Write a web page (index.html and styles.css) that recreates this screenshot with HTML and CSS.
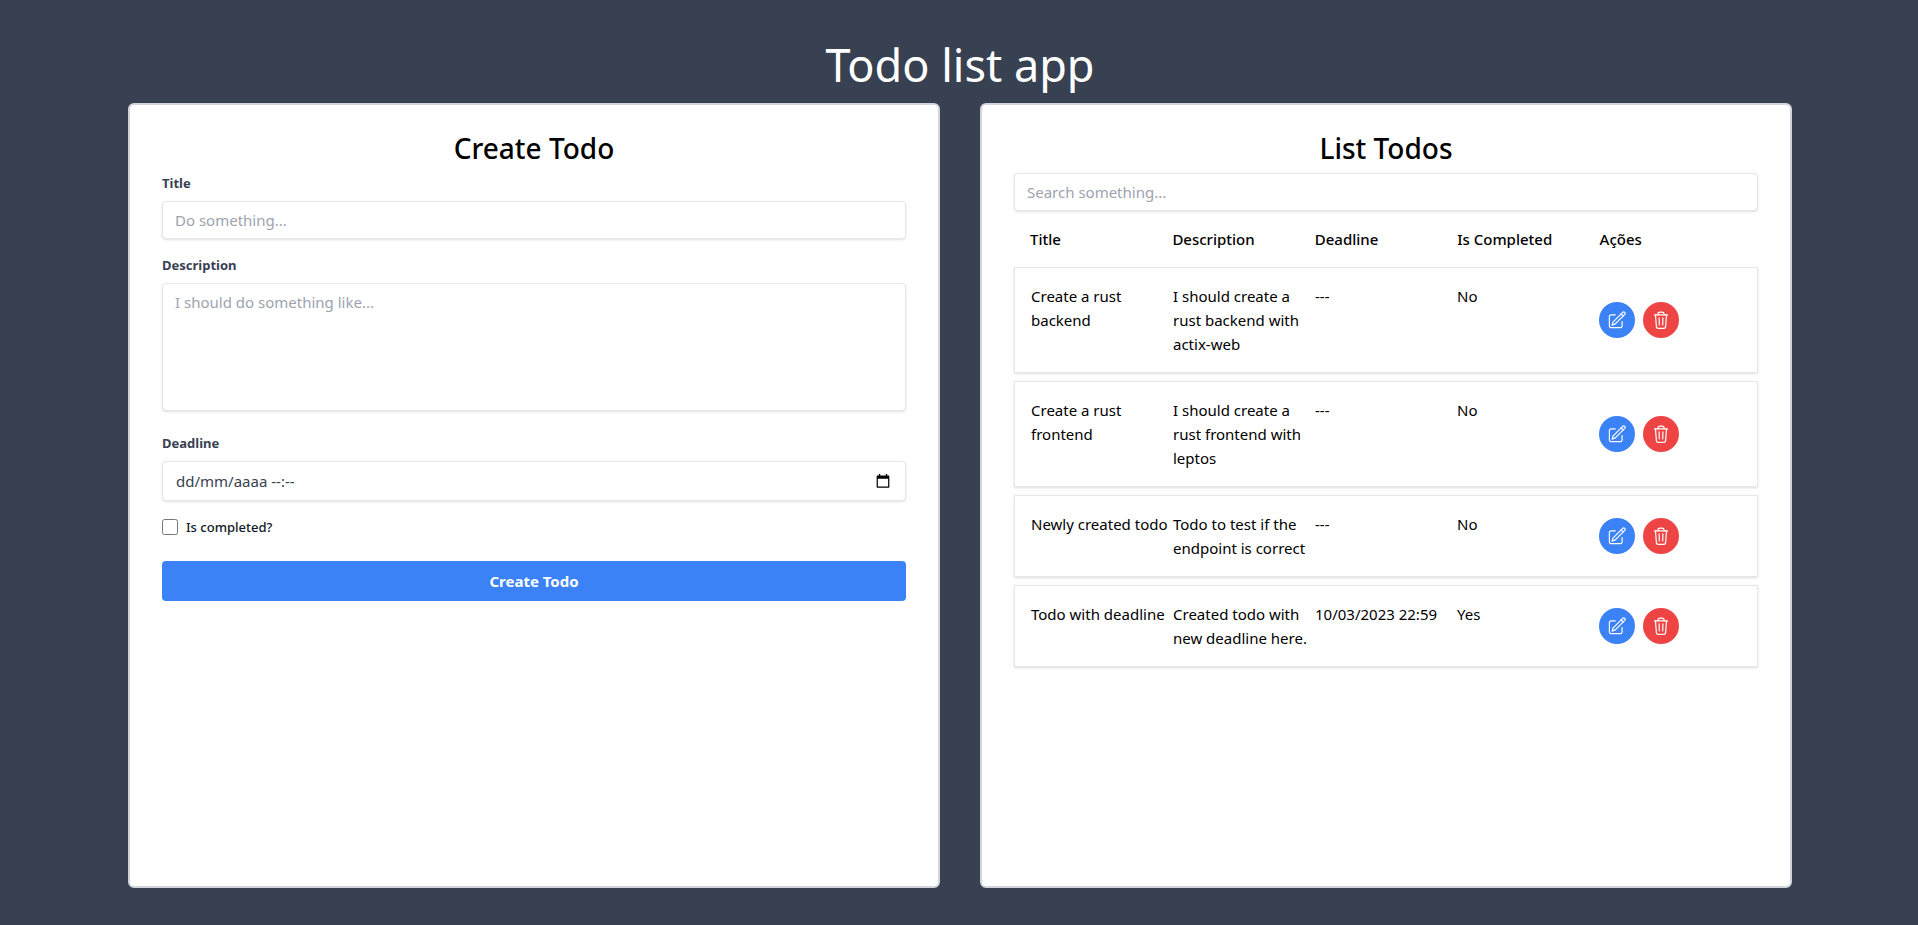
FILE: index.html
```html
<!DOCTYPE html>
<html lang="en">
<head>
<meta charset="utf-8">
<meta name="viewport" content="width=device-width, initial-scale=1">
<title>Todo list app</title>
<link rel="stylesheet" href="styles.css">
</head>
<body>
<svg class="sprite" aria-hidden="true">
  <symbol id="edit" viewBox="0 0 18 18">
    <g fill="none" stroke="currentColor" stroke-width="1.2" stroke-linecap="round" stroke-linejoin="round">
      <path d="M7.2 3.900H2.900A1.500 1.500 0 0 0 1.400 5.400v9.700a1.500 1.500 0 0 0 1.500 1.500h9.700a1.500 1.500 0 0 0 1.500-1.500V10.500"/>
      <path d="M14.700 1.300a1.450 1.450 0 0 1 2.050 2.050L7.300 12.900 4 14.100 5.200 10.800z"/>
      <path d="M13.200 2.900l2 2"/>
    </g>
  </symbol>
  <symbol id="trash" viewBox="0 0 18 18">
    <g fill="none" stroke="currentColor" stroke-width="1.2" stroke-linecap="round" stroke-linejoin="round">
      <path d="M2.500 3.900h13"/>
      <path d="M5.700 3.700C5.900 1.900 6.800 1.200 8 1.200h2c1.200 0 2.100.7 2.300 2.500"/>
      <path d="M3.500 4.200l.9 11.400a1.800 1.800 0 0 0 1.800 1.700h5.600a1.800 1.800 0 0 0 1.800-1.700l.9-11.400"/>
      <path d="M7.100 6.900l.2 7M10.900 6.900l-.2 7"/>
    </g>
  </symbol>
</svg>
<div class="page">
  <h1 class="page-title">Todo list app</h1>
  <main class="panels">
    <section class="panel">
      <h2 class="panel-title">Create Todo</h2>
      <form class="form">
        <div class="field">
          <label class="label" for="title">Title</label>
          <input class="control" id="title" type="text" placeholder="Do something...">
        </div>
        <div class="field field-area">
          <label class="label" for="description">Description</label>
          <textarea class="control area" id="description" placeholder="I should do something like..."></textarea>
        </div>
        <div class="field">
          <label class="label" for="deadline">Deadline</label>
          <div class="control date">
            <input class="date-input" id="deadline" type="text" placeholder="dd/mm/aaaa --:--">
            <button class="date-button" type="button" aria-label="Open calendar">
              <svg class="date-icon" viewBox="0 0 14 15" aria-hidden="true"><path fill="currentColor" fill-rule="evenodd" d="M2.500 0H4v1.500h6V0h1.500v1.500H13a.8.8 0 0 1 .8.8V14a.8.8 0 0 1-.8.8H1A.8.8 0 0 1 .2 14V2.300a.8.8 0 0 1 .8-.8h1.500zM1.500 5v8.500h11V5z"/></svg>
            </button>
          </div>
        </div>
        <div class="check">
          <input class="checkbox" id="completed" type="checkbox">
          <label class="check-label" for="completed">Is completed?</label>
        </div>
        <button class="submit" type="button">Create Todo</button>
      </form>
    </section>
    <section class="panel">
      <h2 class="panel-title">List Todos</h2>
      <input class="control" type="text" placeholder="Search something..." aria-label="Search">
      <table class="todos">
        <thead class="head">
          <tr class="row head-row"><th>Title</th><th>Description</th><th>Deadline</th><th>Is Completed</th><th>Ações</th></tr>
        </thead>
        <tbody class="body">
          <tr class="row item">
            <td>Create a rust backend</td><td>I should create a rust backend with actix-web</td><td>---</td><td>No</td>
            <td class="actions"><button class="round edit" type="button" aria-label="Edit"><svg class="icon"><use href="#edit"/></svg></button><button class="round delete" type="button" aria-label="Delete"><svg class="icon"><use href="#trash"/></svg></button></td>
          </tr>
          <tr class="row item">
            <td>Create a rust frontend</td><td>I should create a rust frontend with leptos</td><td>---</td><td>No</td>
            <td class="actions"><button class="round edit" type="button" aria-label="Edit"><svg class="icon"><use href="#edit"/></svg></button><button class="round delete" type="button" aria-label="Delete"><svg class="icon"><use href="#trash"/></svg></button></td>
          </tr>
          <tr class="row item">
            <td>Newly created todo</td><td>Todo to test if the endpoint is correct</td><td>---</td><td>No</td>
            <td class="actions"><button class="round edit" type="button" aria-label="Edit"><svg class="icon"><use href="#edit"/></svg></button><button class="round delete" type="button" aria-label="Delete"><svg class="icon"><use href="#trash"/></svg></button></td>
          </tr>
          <tr class="row item">
            <td>Todo with deadline</td><td>Created todo with new deadline here.</td><td>10/03/2023 22:59</td><td>Yes</td>
            <td class="actions"><button class="round edit" type="button" aria-label="Edit"><svg class="icon"><use href="#edit"/></svg></button><button class="round delete" type="button" aria-label="Delete"><svg class="icon"><use href="#trash"/></svg></button></td>
          </tr>
        </tbody>
      </table>
    </section>
  </main>
</div>
</body>
</html>
```
FILE: styles.css
```css
*, *::before, *::after { box-sizing: border-box; }

body {
  margin: 0;
  background: #374151;
  color: #000;
  font-family: "Noto Sans", "Open Sans", sans-serif;
  font-size: 15px;
  line-height: 24px;
}

h1, h2, th, td { margin: 0; padding: 0; }

input, textarea, button { font: inherit; margin: 0; }

.sprite { display: none; }

.page {
  display: flex;
  flex-direction: column;
  min-height: 100vh;
  padding: 41px 126px 37px 128px;
}

.page-title {
  margin-bottom: 14px;
  color: #fff;
  font-size: 45px;
  font-weight: 400;
  line-height: 48px;
  text-align: center;
}

.panels {
  flex: 1;
  display: grid;
  grid-template-columns: 1fr 1fr;
  gap: 40px;
}

.panel {
  min-width: 0;
  padding: 24px 32px;
  background: #fff;
  border: 2px solid #d1d5db;
  border-radius: 6px;
}

.panel-title {
  margin-bottom: 6px;
  font-size: 28px;
  font-weight: 500;
  line-height: 38px;
  text-align: center;
}

.field { margin-bottom: 16px; }
.field-area { margin-bottom: 22px; }

.label {
  display: block;
  margin-bottom: 8px;
  color: #374151;
  font-size: 13px;
  font-weight: 700;
  line-height: 20px;
}

.control {
  display: block;
  width: 100%;
  height: 38px;
  padding: 0 12px;
  color: #374151;
  background: #fff;
  border: 1px solid #e5e7eb;
  border-radius: 4px;
  box-shadow: 0 1px 3px rgba(0, 0, 0, .1), 0 1px 2px -1px rgba(0, 0, 0, .1);
}

.control::placeholder { color: #9ca3af; opacity: 1; }

.area {
  height: 128px;
  padding: 6px 12px;
  resize: none;
}

.date {
  display: flex;
  align-items: center;
  height: 40px;
  padding: 0 15px 0 13px;
}

.date-input {
  flex: 1;
  min-width: 0;
  padding: 0;
  color: #374151;
  background: none;
  border: 0;
}

.date-input::placeholder { color: #374151; opacity: 1; }

.date-button {
  display: flex;
  padding: 0;
  color: #000;
  background: none;
  border: 0;
}

.date-icon { width: 14px; height: 14px; }

.check {
  display: flex;
  align-items: center;
  gap: 8px;
  margin-bottom: 24px;
}

.checkbox { width: 16px; height: 16px; }

.check-label {
  color: #111827;
  font-size: 13px;
  font-weight: 500;
  line-height: 20px;
}

.submit {
  display: block;
  width: 100%;
  height: 40px;
  padding: 0 16px;
  color: #fff;
  background: #3b82f6;
  border: 0;
  border-radius: 4px;
  font-weight: 700;
}

.todos, .head { display: block; }

.row {
  display: grid;
  grid-template-columns: repeat(5, minmax(0, 1fr));
  padding: 16px;
}

.head-row th { font-weight: 500; text-align: left; }

.body {
  display: flex;
  flex-direction: column;
  gap: 8px;
}

.item {
  border: 1px solid #e5e7eb;
  box-shadow: 0 1px 3px rgba(0, 0, 0, .1), 0 1px 2px -1px rgba(0, 0, 0, .1);
}

.actions {
  display: flex;
  align-items: center;
  gap: 8px;
}

.round {
  display: flex;
  align-items: center;
  justify-content: center;
  width: 36px;
  height: 36px;
  padding: 0;
  color: #fff;
  border: 0;
  border-radius: 50%;
}

.edit { background: #3b82f6; }
.delete { background: #ef4444; }

.icon { width: 18px; height: 18px; }
```
